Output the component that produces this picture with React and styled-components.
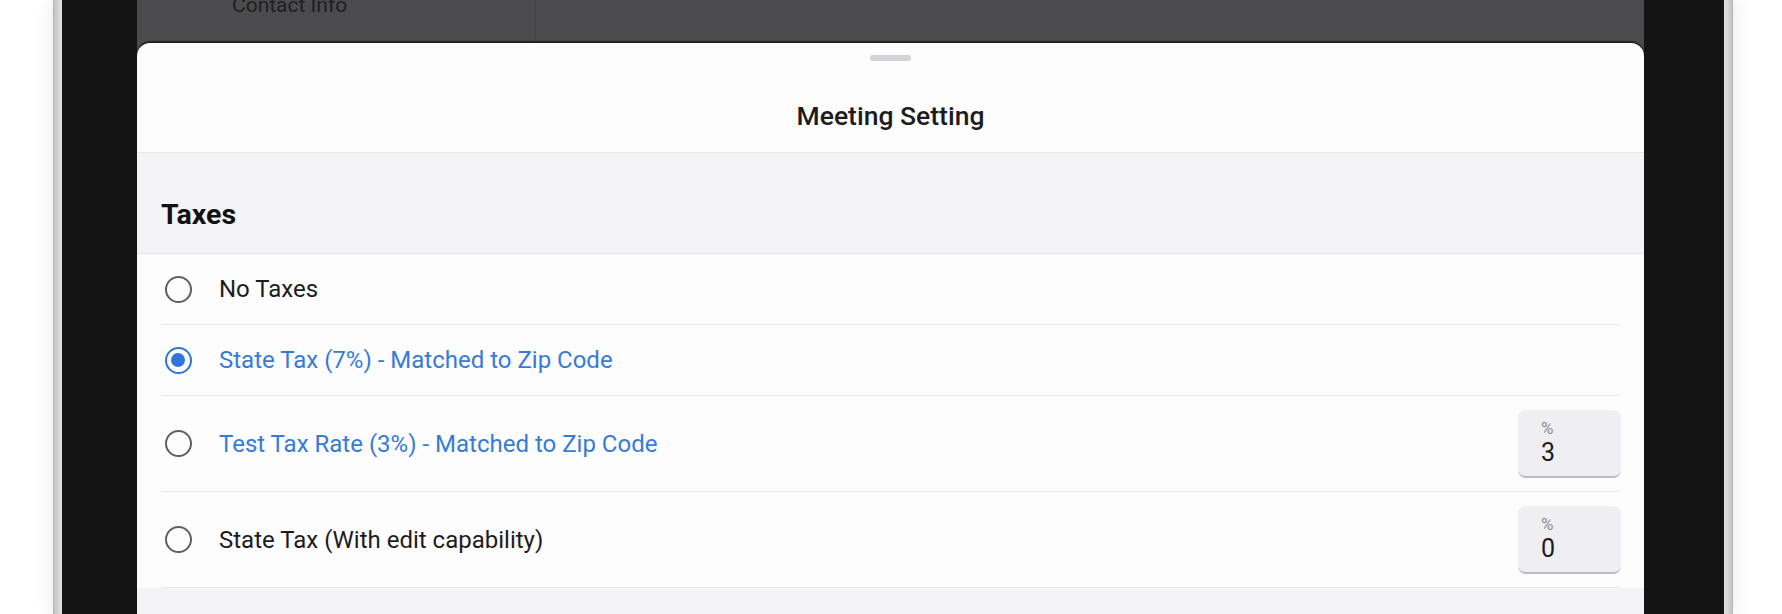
import React from 'react';
import styled, { createGlobalStyle } from 'styled-components';

const GlobalStyle = createGlobalStyle`
  body {
    margin: 0;
    font-family: Roboto, "Liberation Sans", sans-serif;
    background: #ffffff;
  }
`;

const options = [
  { id: 'none', label: 'No Taxes', selected: false, blue: false },
  { id: 'state', label: 'State Tax (7%) - Matched to Zip Code', selected: true, blue: true },
  { id: 'test', label: 'Test Tax Rate (3%) - Matched to Zip Code', selected: false, blue: true, value: '3' },
  { id: 'edit', label: 'State Tax (With edit capability)', selected: false, blue: false, value: '0' },
];

function Radio({ checked }) {
  return (
    <RadioBox>
      <RadioRing checked={checked}>{checked && <RadioDot />}</RadioRing>
    </RadioBox>
  );
}

function App() {
  return (
    <>
      <GlobalStyle />
      <Page>
        <Frame>
          <Bezel>
            <Screen>
              <BackApp>
                <BackColumn>
                  <BackText>Contact Info</BackText>
                </BackColumn>
              </BackApp>
              <Sheet>
                <SheetHeader>
                  <Handle />
                  <Title>Meeting Setting</Title>
                </SheetHeader>
                <SectionHeader>Taxes</SectionHeader>
                <List>
                  {options.map((o) => (
                    <Row key={o.id} tall={o.value !== undefined}>
                      <Radio checked={o.selected} />
                      <Label blue={o.blue}>{o.label}</Label>
                      {o.value !== undefined && (
                        <RateField>
                          <RateUnit>%</RateUnit>
                          <RateValue>{o.value}</RateValue>
                        </RateField>
                      )}
                    </Row>
                  ))}
                </List>
                <Footer />
              </Sheet>
            </Screen>
          </Bezel>
        </Frame>
      </Page>
    </>
  );
}

export default App;

const Page = styled.div`
  width: 1782px;
  height: 614px;
  overflow: hidden;
  display: flex;
  padding-left: 53px;
  box-sizing: border-box;
  background: #ffffff;
`;

const Frame = styled.div`
  width: 1680px;
  display: flex;
  padding: 0 8px;
  border-left: 1px solid #b4b4b4;
  border-right: 1px solid #b4b4b4;
  background: linear-gradient(90deg, #c4c4c4 0%, #dedede 0.4%, #d2d2d2 0.6%, #d2d2d2 99.4%, #dedede 99.6%, #c4c4c4 100%);
  box-shadow: 0 0 18px rgba(0, 0, 0, 0.1);
  box-sizing: border-box;
`;

const Bezel = styled.div`
  flex: 1;
  display: flex;
  background: #141414;
  padding: 0 80px 0 75px;
`;

const Screen = styled.div`
  flex: 1;
  display: flex;
  flex-direction: column;
  background: #4b4a4d;
  overflow: hidden;
`;

const BackApp = styled.div`
  height: 43px;
  flex-shrink: 0;
  display: flex;
`;

const BackColumn = styled.div`
  width: 399px;
  box-sizing: border-box;
  border-right: 1px solid #444346;
  padding-left: 95px;
  overflow: hidden;
`;

const BackText = styled.div`
  margin-top: -7px;
  font-size: 21px;
  line-height: 24px;
  color: #1f1f21;
`;

const Sheet = styled.div`
  flex: 1;
  display: flex;
  flex-direction: column;
  background: #fdfdfd;
  border-radius: 13px 13px 0 0;
  box-shadow: 0 -2px 1px rgba(0, 0, 0, 0.55);
  overflow: hidden;
`;

const SheetHeader = styled.div`
  height: 110px;
  flex-shrink: 0;
  box-sizing: border-box;
  display: flex;
  flex-direction: column;
  align-items: center;
  border-bottom: 1px solid #e6e5ea;
`;

const Handle = styled.div`
  width: 41px;
  height: 6px;
  margin-top: 12px;
  border-radius: 3px;
  background: #d3d3d7;
`;

const Title = styled.div`
  margin-top: 40px;
  font-size: 26.5px;
  line-height: 30px;
  font-weight: 500;
  color: #1c1c1e;
`;

const SectionHeader = styled.div`
  height: 101px;
  flex-shrink: 0;
  box-sizing: border-box;
  padding: 47px 24px 0;
  background: #f4f3f6;
  border-bottom: 1px solid #e4e3e8;
  font-size: 28.5px;
  line-height: 30px;
  font-weight: 700;
  color: #111113;
`;

const List = styled.div`
  padding: 0 23px 0 24px;
  background: #fdfdfd;
  flex-shrink: 0;
`;

const Row = styled.div`
  display: flex;
  align-items: center;
  box-sizing: border-box;
  height: ${(p) => (p.tall ? '96px' : '71px')};
  border-bottom: 1px solid #e9e8ed;
`;

const RadioBox = styled.div`
  width: 34px;
  display: flex;
  justify-content: center;
  margin-right: 24px;
`;

const RadioRing = styled.div`
  width: 27px;
  height: 27px;
  box-sizing: border-box;
  border-radius: 50%;
  border: 2.5px solid ${(p) => (p.checked ? '#2f73db' : '#5f5f63')};
  display: flex;
  align-items: center;
  justify-content: center;
`;

const RadioDot = styled.div`
  width: 14px;
  height: 14px;
  border-radius: 50%;
  background: #2f73db;
`;

const Label = styled.div`
  flex: 1;
  font-size: 24px;
  line-height: 28px;
  color: ${(p) => (p.blue ? '#377bd8' : '#1c1c1e')};
`;

const RateField = styled.div`
  width: 103px;
  height: 68px;
  box-sizing: border-box;
  padding: 8px 0 0 23px;
  border-radius: 8px;
  background: #efeef2;
  border-bottom: 2px solid #bdbcc2;
`;

const RateUnit = styled.div`
  font-size: 17px;
  line-height: 20px;
  color: #8e8e93;
`;

const RateValue = styled.div`
  margin-top: 1px;
  font-size: 25px;
  line-height: 28px;
  color: #1c1c1e;
`;

const Footer = styled.div`
  flex: 1;
  background: #f4f3f6;
`;
